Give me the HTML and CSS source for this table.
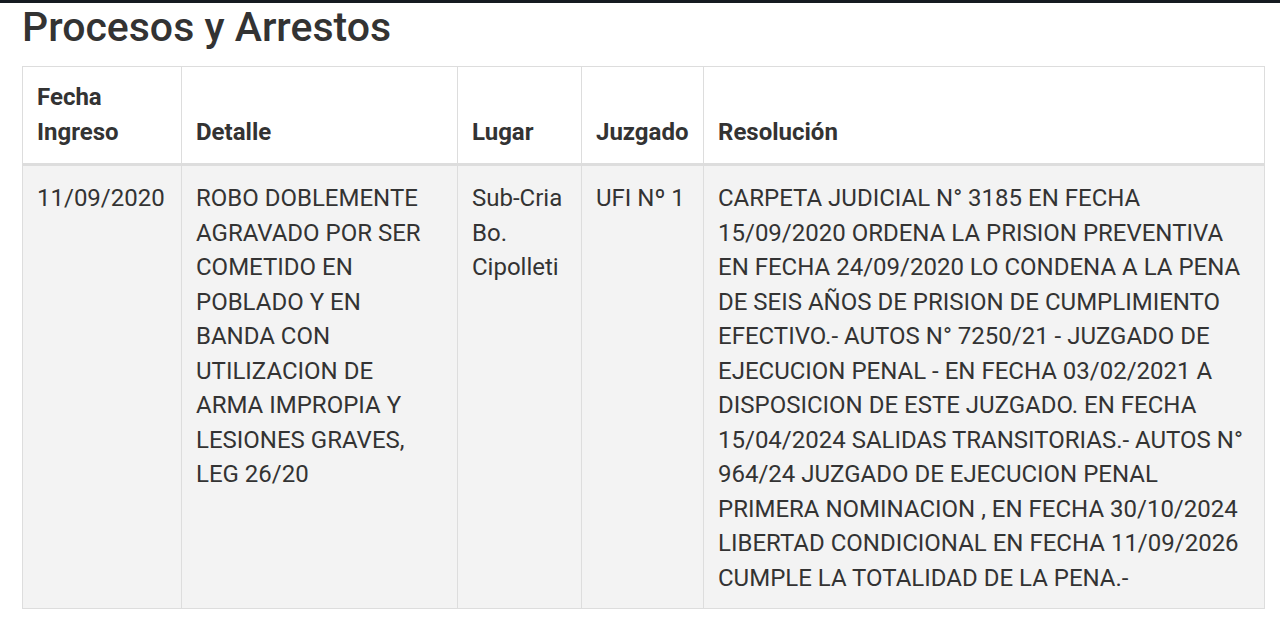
FILE: index.html
```html
<!DOCTYPE html>
<html lang="es">
<head>
<meta charset="utf-8">
<title>Procesos y Arrestos</title>
<link rel="stylesheet" href="styles.css">
</head>
<body>
<div class="topbar"></div>
<main class="content">
  <h1 class="title">Procesos y Arrestos</h1>
  <table class="records">
    <colgroup>
      <col class="c-fecha">
      <col class="c-detalle">
      <col class="c-lugar">
      <col class="c-juzgado">
      <col class="c-resol">
    </colgroup>
    <thead>
      <tr>
        <th>Fecha Ingreso</th>
        <th>Detalle</th>
        <th>Lugar</th>
        <th>Juzgado</th>
        <th>Resolución</th>
      </tr>
    </thead>
    <tbody>
      <tr>
        <td>11/09/2020</td>
        <td>ROBO DOBLEMENTE AGRAVADO POR SER COMETIDO EN POBLADO Y EN BANDA CON UTILIZACION DE ARMA IMPROPIA Y LESIONES GRAVES, LEG 26/20</td>
        <td>Sub-Cria Bo. Cipolleti</td>
        <td>UFI Nº 1</td>
        <td>CARPETA JUDICIAL N° 3185 EN FECHA 15/09/2020 ORDENA LA PRISION PREVENTIVA EN FECHA 24/09/2020 LO CONDENA A LA PENA DE SEIS AÑOS DE PRISION DE CUMPLIMIENTO EFECTIVO.- AUTOS N° 7250/21 - JUZGADO DE EJECUCION PENAL - EN FECHA 03/02/2021 A DISPOSICION DE ESTE JUZGADO. EN FECHA 15/04/2024 SALIDAS TRANSITORIAS.- AUTOS N° 964/24 JUZGADO DE EJECUCION PENAL PRIMERA NOMINACION , EN FECHA 30/10/2024 LIBERTAD CONDICIONAL EN FECHA 11/09/2026 CUMPLE LA TOTALIDAD DE LA PENA.-</td>
      </tr>
    </tbody>
  </table>
</main>
</body>
</html>
```

FILE: styles.css
```css
html, body {
  margin: 0;
  padding: 0;
  background: #ffffff;
}

body {
  font-family: Roboto, "Liberation Sans", Arial, sans-serif;
  color: #333333;
}

.topbar {
  height: 3px;
  background: #161b21;
}

.content {
  padding: 0 17px 0 22px;
}

.title {
  margin: 0 0 15px 0;
  font-size: 41px;
  line-height: 48px;
  font-weight: 500;
  color: #333333;
}

.records {
  width: 1242px;
  table-layout: fixed;
  border-collapse: collapse;
  font-size: 24px;
  line-height: 34.5px;
}

.c-fecha { width: 159px; }
.c-detalle { width: 276px; }
.c-lugar { width: 124px; }
.c-juzgado { width: 122px; }
.c-resol { width: 561px; }

.records th,
.records td {
  border: 1px solid #dddddd;
  padding: 14px 14px;
  text-align: left;
}

.records th {
  vertical-align: bottom;
  font-weight: 700;
  background: #ffffff;
  border-bottom: 3px solid #dddddd;
  padding-top: 13px;
  padding-bottom: 14px;
}

.records td {
  vertical-align: top;
  background: #f3f3f3;
  padding-top: 15px;
  padding-bottom: 13px;
}
```
